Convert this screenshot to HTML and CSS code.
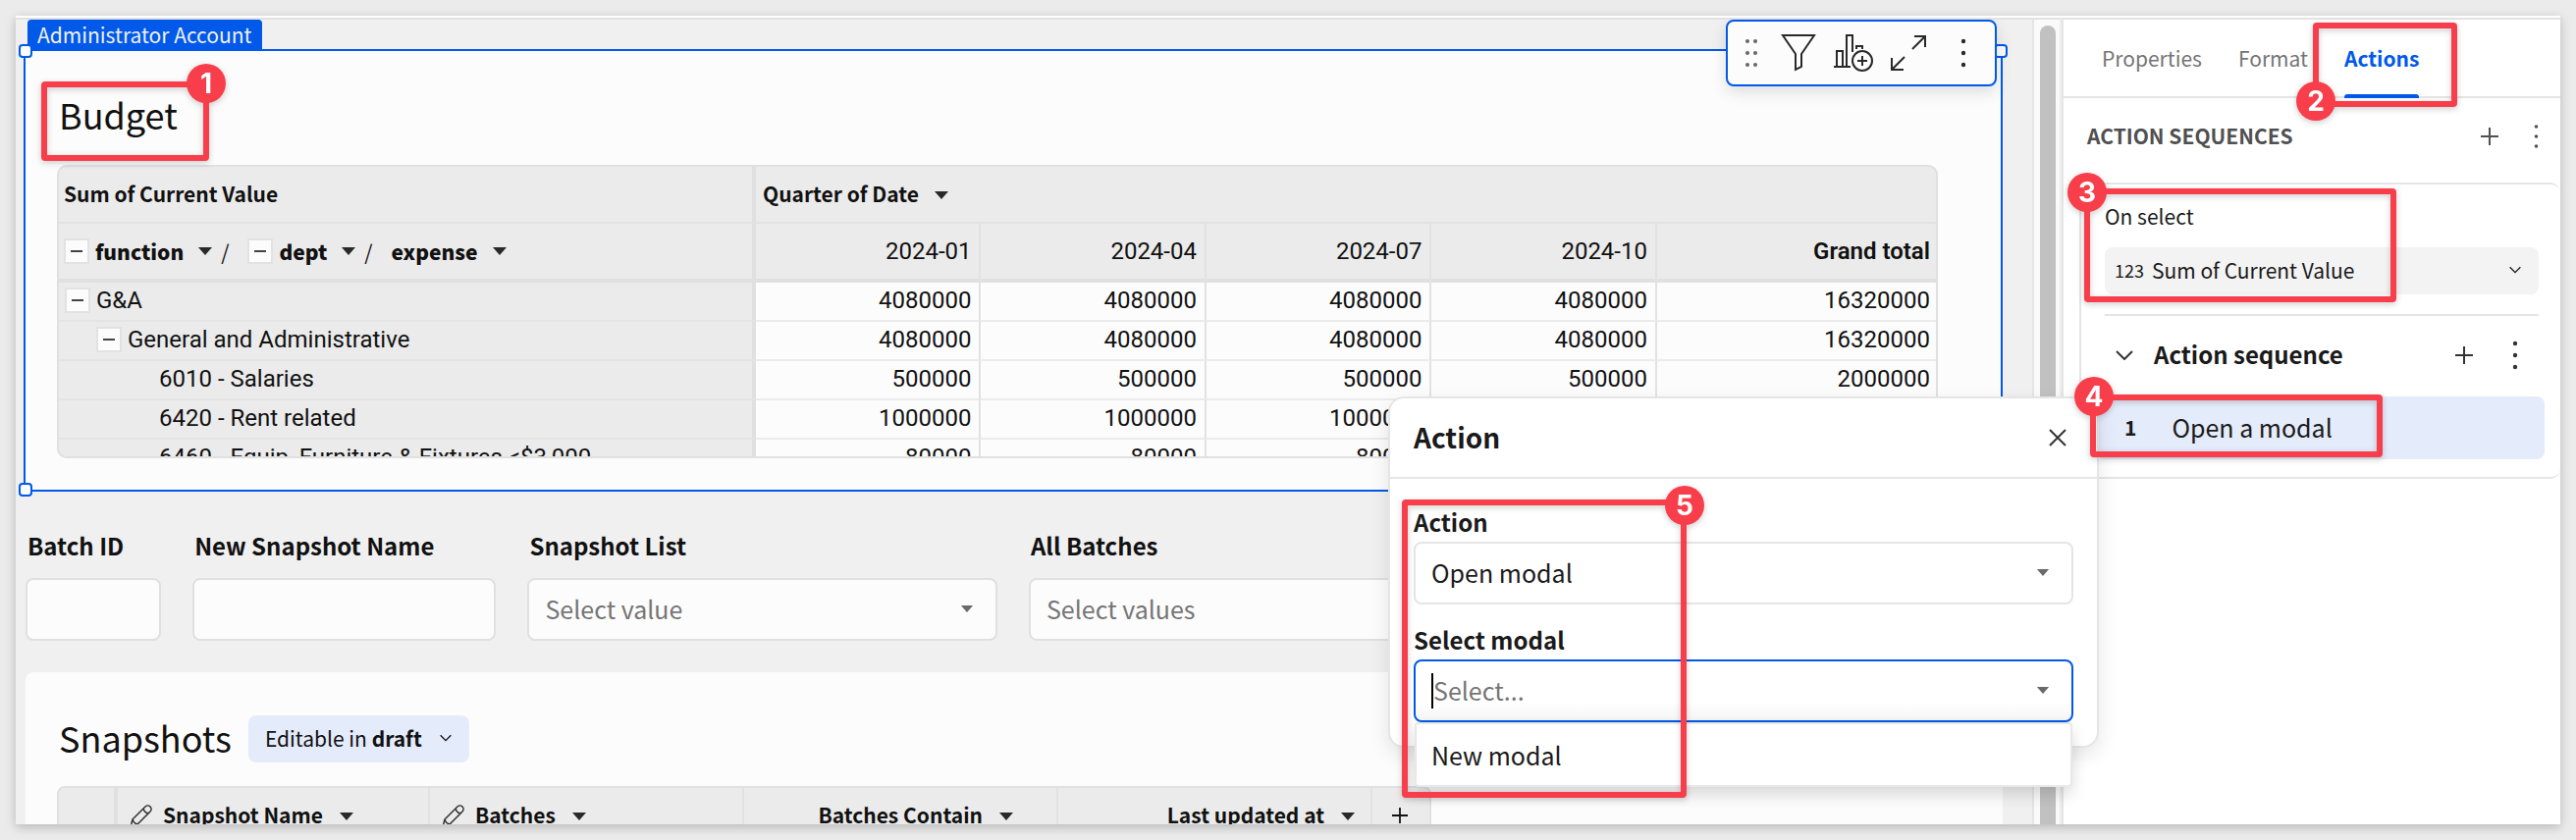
FILE: index.html
```html
<!DOCTYPE html>
<html lang="en">
<head>
<meta charset="utf-8">
<title>Budget workbook</title>
<link rel="stylesheet" href="styles.css">
</head>
<body>
<svg class="defs" aria-hidden="true">
  <symbol id="caret" viewBox="0 0 14 8"><path d="M0 0h14L7 8z" fill="currentColor"/></symbol>
  <symbol id="plus" viewBox="0 0 18 18"><path d="M9 0v18M0 9h18" stroke="currentColor" stroke-width="2"/></symbol>
  <symbol id="chev" viewBox="0 0 18 10"><path d="M1 1l8 8 8-8" fill="none" stroke="currentColor" stroke-width="2"/></symbol>
  <symbol id="dots" viewBox="0 0 6 30"><g fill="currentColor"><circle cx="3" cy="3" r="2.2"/><circle cx="3" cy="15" r="2.2"/><circle cx="3" cy="27" r="2.2"/></g></symbol>
  <symbol id="pencil" viewBox="0 0 24 24"><g fill="none" stroke="currentColor" stroke-width="1.5" stroke-linejoin="round"><path d="M1 23l2-8L16 2c1.500-1.500 3.500-1.500 5 0s1.500 3.500 0 5L8 20z"/><path d="M14 4q1 4 5 5M3 15q1 4 5 5"/></g></symbol>
</svg>
<div class="window">
  <main class="canvas">
    <span class="tag">Administrator Account</span>
    <section class="card selected">
      <i class="handle tl"></i><i class="handle tr"></i><i class="handle bl"></i>
      <div class="toolbar">
        <button class="drag" aria-label="Move"><svg width="12" height="28" viewBox="0 0 12 28" fill="#666"><circle cx="2" cy="2" r="2"/><circle cx="10" cy="2" r="2"/><circle cx="2" cy="14" r="2"/><circle cx="10" cy="14" r="2"/><circle cx="2" cy="26" r="2"/><circle cx="10" cy="26" r="2"/></svg></button>
        <button aria-label="Filter"><svg width="36" height="38" viewBox="0 0 36 38" fill="none" stroke="#292929" stroke-width="2"><path d="M2 1h32L21 20v13l-6 3V20z"/></svg></button>
        <button aria-label="Add child element"><svg width="40" height="38" viewBox="0 0 40 38" fill="none" stroke="#292929" stroke-width="2"><path d="M0 33h17M3 33V17h6v16M13 33V1h6v17M23 15v-3h6v3"/><circle cx="29" cy="27" r="10"/><path d="M29 22v10M24 27h10"/></svg></button>
        <button aria-label="Maximize"><svg width="36" height="36" viewBox="0 0 36 36" fill="none" stroke="#292929" stroke-width="2"><path d="M22 14L35 1M24 1h11v11M14 22L1 35M1 23v12h12"/></svg></button>
        <button class="more" aria-label="More"><svg width="6" height="30" class="dark"><use href="#dots"/></svg></button>
      </div>
      <h1>Budget</h1>
      <div class="pivot">
        <table>
          <colgroup><col class="c-dim"><col><col><col><col><col class="c-total"></colgroup>
          <thead>
            <tr><th>Sum of Current Value</th><th colspan="5">Quarter of Date<svg class="caret"><use href="#caret"/></svg></th></tr>
            <tr><th><div class="dims"><button class="fold" aria-label="Collapse function"></button><b>function</b><svg class="caret"><use href="#caret"/></svg><span class="slash">/</span><button class="fold" aria-label="Collapse dept"></button><b>dept</b><svg class="caret"><use href="#caret"/></svg><span class="slash">/</span><b>expense</b><svg class="caret"><use href="#caret"/></svg></div></th><td>2024-01</td><td>2024-04</td><td>2024-07</td><td>2024-10</td><td class="total">Grand total</td></tr>
          </thead>
          <tbody>
            <tr><th><div class="row"><button class="fold" aria-label="Collapse"></button>G&amp;A</div></th><td>4080000</td><td>4080000</td><td>4080000</td><td>4080000</td><td>16320000</td></tr>
            <tr><th><div class="row l2"><button class="fold" aria-label="Collapse"></button>General and Administrative</div></th><td>4080000</td><td>4080000</td><td>4080000</td><td>4080000</td><td>16320000</td></tr>
            <tr><th><div class="row l3">6010 - Salaries</div></th><td>500000</td><td>500000</td><td>500000</td><td>500000</td><td>2000000</td></tr>
            <tr><th><div class="row l3">6420 - Rent related</div></th><td>1000000</td><td>1000000</td><td>1000000</td><td>1000000</td><td>4000000</td></tr>
            <tr><th><div class="row l3">6460 - Equip, Furniture &amp; Fixtures &lt;$3,000</div></th><td>80000</td><td>80000</td><td>80000</td><td>80000</td><td>320000</td></tr>
          </tbody>
        </table>
      </div>
    </section>
    <div class="controls">
      <div class="field"><label for="batch">Batch ID</label><input id="batch" type="text"></div>
      <div class="field"><label for="snap">New Snapshot Name</label><input id="snap" type="text"></div>
      <div class="field"><label for="list">Snapshot List</label><div class="pick"><select id="list"><option>Select value</option></select><svg class="caret"><use href="#caret"/></svg></div></div>
      <div class="field"><label for="all">All Batches</label><div class="pick"><select id="all"><option>Select values</option></select><svg class="caret"><use href="#caret"/></svg></div></div>
    </div>
    <section class="card snapshots">
      <div class="title"><h2>Snapshots</h2><button class="pill"><span>Editable in <b>draft</b></span><svg width="12" height="8"><use href="#chev"/></svg></button></div>
      <table class="grid">
        <colgroup><col class="g-num"><col class="g-name"><col class="g-col"><col class="g-col"><col class="g-col"><col class="g-add"></colgroup>
        <thead><tr>
          <th></th>
          <th><svg class="pencil"><use href="#pencil"/></svg>Snapshot Name<svg class="caret"><use href="#caret"/></svg></th>
          <th><svg class="pencil"><use href="#pencil"/></svg>Batches<svg class="caret"><use href="#caret"/></svg></th>
          <th class="end far">Batches Contain<svg class="caret"><use href="#caret"/></svg></th>
          <th class="end">Last updated at<svg class="caret"><use href="#caret"/></svg></th>
          <th class="add"><button aria-label="Add column"><svg width="16" height="16"><use href="#plus"/></svg></button></th>
        </tr></thead>
      </table>
    </section>
  </main>
  <div class="scroll"><div class="thumb"></div></div>
  <aside class="panel">
    <nav class="tabs"><a href="#">Properties</a><a href="#">Format</a><a href="#" class="on">Actions</a></nav>
    <div class="head"><h3>ACTION SEQUENCES</h3><button aria-label="Add"><svg width="18" height="18"><use href="#plus"/></svg></button><button aria-label="More"><svg width="5" height="26"><use href="#dots"/></svg></button></div>
    <div class="seq">
      <label for="trigger">On select</label>
      <div class="trigger"><span>123</span><select id="trigger"><option>Sum of Current Value</option></select><svg width="12" height="8"><use href="#chev"/></svg></div>
      <div class="seq-head"><svg width="18" height="10"><use href="#chev"/></svg><h4>Action sequence</h4><button aria-label="Add action"><svg width="18" height="18"><use href="#plus"/></svg></button><button aria-label="More"><svg width="6" height="30"><use href="#dots"/></svg></button></div>
      <div class="step"><b>1</b><span>Open a modal</span></div>
    </div>
  </aside>
</div>

<div class="modal" role="dialog" aria-labelledby="modal-title">
  <header><h3 id="modal-title">Action</h3><button aria-label="Close"><svg width="18" height="18" viewBox="0 0 18 18"><path d="M1 1l16 16M17 1L1 17" stroke="#333" stroke-width="2"/></svg></button></header>
  <div class="form">
    <label for="act">Action</label>
    <div class="pick dark-text"><select id="act"><option>Open modal</option></select><svg class="caret"><use href="#caret"/></svg></div>
    <label for="target">Select modal</label>
    <div class="pick focus"><input id="target" type="text" role="combobox" aria-expanded="true" aria-controls="menu" placeholder="Select..."><i class="cursor"></i><svg class="caret"><use href="#caret"/></svg>
      <ul class="menu" id="menu" role="listbox"><li role="option">New modal</li></ul>
    </div>
  </div>
</div>

<div class="mark m1"><span>1</span></div>
<div class="mark m2"><span>2</span></div>
<div class="mark m3"><span>3</span></div>
<div class="mark m4"><span>4</span></div>
<div class="mark m5"><span>5</span></div>
</body>
</html>
```
FILE: styles.css
```css
* { box-sizing: border-box; }
body {
  margin: 0; padding: 16px; min-height: 100vh; display: flex; background: #ebebeb; color: #111; overflow: hidden;
  font-family: "Noto Sans CJK SC", "Noto Sans", sans-serif; font-size: 21px; line-height: 32px;
}
h1, h2, h3, h4, ul { margin: 0; padding: 0; }
h3, h4 { font-weight: 700; }
button { padding: 0; border: 0; background: none; color: inherit; font: inherit; display: flex; align-items: center; justify-content: center; }
input, select { width: 100%; border: 0; background: none; font: inherit; color: inherit; appearance: none; outline: 0; }
svg { display: block; flex: none; }
.defs { position: absolute; width: 0; height: 0; }
.caret { width: 14px; height: 8px; color: #292929; }

.window {
  flex: 1; height: calc(100vh - 32px); display: grid; grid-template-columns: 1fr 30px 508px; overflow: hidden;
  border-top: 2px solid #fff; background: #fff; box-shadow: 0 3px 10px rgba(0, 0, 0, .22);
}
.canvas { border-top: 2px solid #e2e2e2; background: #f0f0f0; padding: 0 30px 0 8px; overflow: hidden; min-width: 0; }
.tag { display: block; width: max-content; height: 30px; margin-left: 4px; padding: 0 10px; border-radius: 4px 4px 0 0; background: #0059e8; color: #f0f0f0; line-height: 30px; }

.card { background: #fcfcfc; }
.selected { position: relative; height: 451px; border: 2px solid #0059e8; padding: 32px 64px 32px 32px; }
.handle { position: absolute; width: 14px; height: 14px; border: 2px solid #0059e8; border-radius: 4px; background: #fcfcfc; }
.tl { left: -7px; top: -7px; }
.tr { right: -7px; top: -7px; }
.bl { left: -7px; bottom: -7px; }
.toolbar {
  position: absolute; right: 4px; top: -32px; width: 276px; height: 68px; padding: 0 29px 0 18px; display: flex; align-items: center; gap: 18px;
  border: 2px solid #0059e8; border-radius: 8px; background: #fcfcfc; box-shadow: 0 6px 16px rgba(0, 0, 0, .12);
}
.drag { margin-right: 6px; }
.more { margin-left: auto; }
.dark { color: #292929; }
h1, h2 { font-size: 36px; line-height: 64px; font-weight: 400; padding-left: 2px; }
h1 { margin-bottom: 20px; }

.pivot { position: relative; height: 299px; overflow: hidden; border-radius: 10px; background: #ebebeb; }
.pivot::after { content: ""; position: absolute; inset: 0; border: 2px solid #e0e0e0; border-radius: 10px; pointer-events: none; }
.pivot table { width: 100%; table-layout: fixed; border-spacing: 0; font: 24px/34px Roboto, sans-serif; }
.c-dim { width: 712px; }
.c-total { width: 286px; }
.pivot th, .pivot td { height: 40px; padding: 0 8px 2px; border-bottom: 2px solid #ebebeb; border-right: 2px solid #e2e2e2; font-weight: 400; text-align: right; white-space: nowrap; }
.pivot td:last-child { padding-right: 6px; }
.pivot th { text-align: left; background: #ebebeb; border-bottom-color: #e4e4e4; }
.pivot th:first-child { border-right: 4px solid #e0e0e0; }
.pivot tbody td { background: #fcfcfc; }
.pivot thead th, .pivot thead td { height: 60px; padding-bottom: 0; border-bottom-color: #e2e2e2; background: #ebebeb; }
.pivot thead th { padding: 0 7px; font: 700 21px/32px "Noto Sans CJK SC", sans-serif; }
.pivot thead tr:last-child > * { border-bottom: 4px solid #e0e0e0; height: 60px; }
.pivot thead th .caret { display: inline-block; margin-left: 16px; vertical-align: 3px; }
.dims { display: flex; align-items: center; }
.dims .fold { margin-right: 6px; }
.pivot .dims .caret { margin-left: 15px; }
.pivot .total { font-weight: 600; }
.slash { margin: 0 19px 0 9px; font-weight: 400; }
.row { display: flex; align-items: center; gap: 6px; }
.l2 { padding-left: 32px; }
.l3 { padding-left: 96px; }
.fold { width: 26px; height: 26px; border: 2px solid #e2e2e2; background: #fcfcfc; }
.fold::before { content: ""; width: 12px; height: 2px; background: #444; }

.controls { display: grid; grid-template-columns: 138fr 309fr 478fr 991fr; gap: 32px; margin: 39px 0 32px 2px; }
.field { min-width: 0; }
.field label { display: block; margin-bottom: 17px; padding-left: 2px; font-size: 24px; font-weight: 700; white-space: nowrap; }
.field > input, .pick { height: 64px; border: 2px solid #e0e0e0; border-radius: 8px; background: #fcfcfc; }
.field > input { display: block; }
.pick { position: relative; display: flex; align-items: center; padding: 0 22px 2px 16px; color: #757575; font-size: 25px; }
.pick .caret { width: 14px; height: 7px; color: #6a6a6a; }

.snapshots { margin-left: 2px; min-height: 400px; padding: 44px 32px 0; border-radius: 8px 8px 0 0; }
.title { display: flex; align-items: center; gap: 17px; height: 48px; margin-bottom: 24px; }
.title h2 { padding-bottom: 4px; }
.pill { height: 48px; padding: 0 18px 2px 17px; gap: 18px; border-radius: 8px; background: #e4ebfb; }
.grid { width: 1400px; table-layout: fixed; border-spacing: 0; border: 2px solid #e0e0e0; border-radius: 8px 8px 0 0; background: #ebebeb; }
.g-num { width: 60px; }
.g-name { width: 318px; }
.g-col { width: 320px; }
.g-add { width: 58px; }
.grid th { height: 56px; padding: 0 0 3px 12px; border-right: 2px solid #e2e2e2; font-weight: 700; text-align: left; white-space: nowrap; }
.grid th:first-child { border-right: 4px solid #e0e0e0; }
.grid th:last-child { border-right: 0; }
.grid .caret { display: inline-block; margin-left: 17px; vertical-align: 3px; }
.grid .end { text-align: right; padding-right: 16px; }
.grid .far { padding-right: 44px; }
.grid .add { padding: 0 20px; }
.pencil { display: inline-block; width: 24px; height: 24px; margin-right: 10px; vertical-align: -5px; color: #333; }

.scroll { border-top: 2px solid #e2e2e2; border-left: 2px solid #e5e5e5; border-right: 2px solid #ededed; background: #fafafa; padding: 6px 4px 0 6px; }
.thumb { width: 16px; height: 100%; border-radius: 8px 8px 0 0; background: #c1c1c1; }
.panel { border-left: 2px solid #e5e5e5; border-top: 2px solid #e2e2e2; background: #fff; color: #1a1a1a; min-width: 0; }
.tabs { display: flex; gap: 37px; height: 80px; padding-left: 39px; border-bottom: 2px solid #e5e5e5; }
.tabs a { height: 80px; line-height: 78px; color: #757575; text-decoration: none; }
.tabs .on { position: relative; color: #0059e8; font-weight: 700; }
.tabs .on::after { content: ""; position: absolute; left: 0; right: 0; bottom: 0; height: 4px; border-radius: 3px 3px 0 0; background: #0059e8; }
.head { display: flex; align-items: center; height: 86px; padding: 0 22px 8px 24px; color: #505050; }
.head h3 { flex: 1; padding-bottom: 2px; font-size: 21px; }
.head button + button { margin-left: 36px; }
.seq { margin-left: 16px; border: 2px solid #e5e5e5; border-right: 0; border-radius: 10px; padding: 16px 22px 18px 24px; }
.trigger { display: flex; align-items: center; gap: 8px; height: 48px; margin-top: 16px; padding: 0 18px 2px 10px; border-radius: 8px; background: #f3f3f3; }
.trigger span { font-size: 18px; }
.seq-head { display: flex; align-items: center; height: 84px; margin-top: 20px; padding: 0 21px 2px 11px; border-top: 2px solid #e5e5e5; color: #333; }
.seq-head h4 { flex: 1; margin-left: 21px; padding-bottom: 2px; font-size: 24px; color: #1a1a1a; }
.seq-head button + button { margin-left: 40px; }
.step { display: flex; align-items: center; height: 64px; margin: 0 -6px 0 -8px; padding: 0 0 2px 28px; gap: 36px; border-radius: 8px; background: #e4ebfb; font-size: 25px; }
.step b { font-size: 21px; }

.modal { position: absolute; right: 486px; top: 404px; width: 724px; height: 358px; border: 2px solid #e5e5e5; border-radius: 16px; background: #fff; color: #1a1a1a; box-shadow: 0 8px 20px rgba(0, 0, 0, .1); }
.modal header { display: flex; align-items: center; justify-content: space-between; height: 82px; padding: 0 31px 0 24px; border-bottom: 2px solid #e5e5e5; }
.modal h3 { padding-bottom: 2px; font-size: 28px; }
.form { padding: 28px 24px 0; }
.form label { display: block; margin-bottom: 4px; font-size: 24px; font-weight: 700; }
.form .pick { margin-bottom: 20px; background: #fff; border-color: #e5e5e5; }
.form .dark-text { color: #1a1a1a; }
.form .focus { border-color: #0059e8; background: linear-gradient(#fff 70%, #f5f5f5); }
.form input::placeholder { color: #757575; opacity: 1; }
.cursor { position: absolute; left: 16px; top: 12px; width: 2px; height: 36px; background: #000; }
.menu { position: absolute; left: -1px; right: -1px; top: 62px; padding: 0 15px; list-style: none; color: #1a1a1a; background: #fff; border: 2px solid #e8e8e8; border-radius: 4px; box-shadow: 0 8px 16px rgba(0, 0, 0, .14); line-height: 62px; }

.mark { position: absolute; border: 6px solid #f83e4b; border-radius: 4px; filter: drop-shadow(0 2px 3px rgba(0, 0, 0, .2)); }
.mark span { position: absolute; width: 40px; height: 40px; border-radius: 50%; background: #f83e4b; color: #fff; font: 700 28px/40px Inter, sans-serif; text-align: center; }
.m1 { left: 42px; top: 83px; width: 171px; height: 81px; }
.m1 span { right: -23px; top: -24px; }
.m2 { right: 121px; top: 23px; width: 147px; height: 86px; }
.m2 span { left: -23px; bottom: -20px; }
.m3 { right: 183px; top: 192px; width: 318px; height: 116px; }
.m3 span { left: -23px; top: -22px; }
.m4 { right: 197px; top: 402px; width: 298px; height: 64px; }
.m4 span { left: -22px; top: -24px; }
.m5 { right: 906px; top: 509px; width: 290px; height: 304px; }
.m5 span { right: -24px; top: -20px; }
```
